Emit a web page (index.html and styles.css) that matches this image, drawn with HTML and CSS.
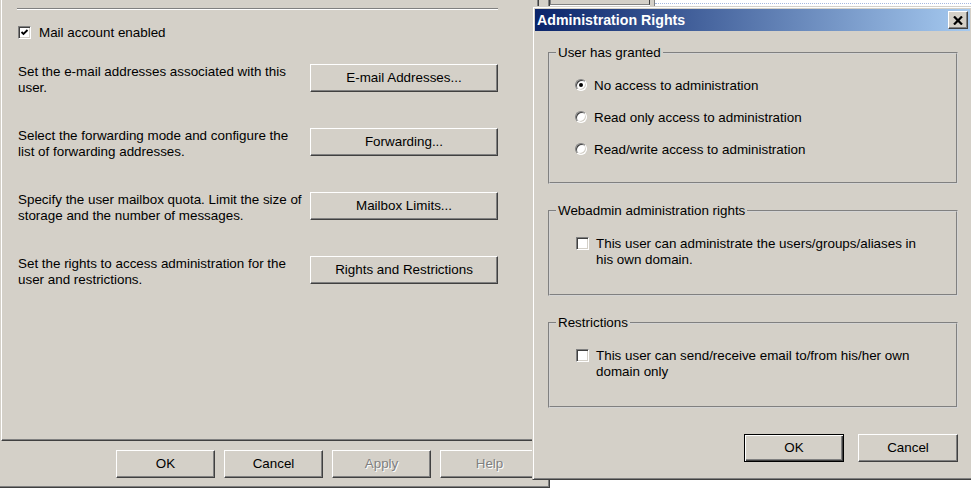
FILE: index.html
```html
<!DOCTYPE html>
<html lang="en">
  <head>
    <meta charset="UTF-8" />
    <title>Administration Rights</title>
    <link rel="stylesheet" href="styles.css">
  </head>
  <body>
    <!-- User properties dialog (behind) -->
    <div class="props">
      <div class="tab-page">
        <div class="etched"></div>

        <label class="check-row">
          <span class="check">
            <svg width="9" height="9" viewBox="0 0 9 9"><polyline points="1.5,4 3.5,6 7.5,2" fill="none" stroke="#000" stroke-width="1.8" /></svg>
          </span>
          Mail account enabled
        </label>

        <div class="options">
          <div class="option">
            <p>Set the e-mail addresses associated with this<br />user.</p>
            <button class="btn wide">E-mail Addresses...</button>
          </div>
          <div class="option">
            <p>Select the forwarding mode and configure the<br />list of forwarding addresses.</p>
            <button class="btn wide">Forwarding...</button>
          </div>
          <div class="option">
            <p>Specify the user mailbox quota. Limit the size of<br />storage and the number of messages.</p>
            <button class="btn wide">Mailbox Limits...</button>
          </div>
          <div class="option">
            <p>Set the rights to access administration for the<br />user and restrictions.</p>
            <button class="btn wide">Rights and Restrictions</button>
          </div>
        </div>
      </div>

      <div class="props-buttons">
        <button class="btn">OK</button>
        <button class="btn">Cancel</button>
        <button class="btn" disabled>Apply</button>
        <button class="btn" disabled>Help</button>
      </div>
    </div>

    <!-- bits of another window peeking above the modal -->
    <div class="behind">
      <div class="behind-box"></div>
      <div class="behind-gap"></div>
      <div class="behind-list"></div>
    </div>

    <!-- Administration Rights modal -->
    <div class="modal">
      <div class="titlebar">
        <span class="title">Administration Rights</span>
        <button class="close-btn">
          <svg width="10" height="9" viewBox="0 0 10 9"><path d="M1 0.5 L9 8.5 M9 0.5 L1 8.5" stroke="#000" stroke-width="2.2" /></svg>
        </button>
      </div>

      <div class="modal-body">
        <fieldset class="group">
          <legend>User has granted</legend>
          <div class="group-body radios">
            <label class="radio-row"><span class="radio on"></span>No access to administration</label>
            <label class="radio-row"><span class="radio"></span>Read only access to administration</label>
            <label class="radio-row"><span class="radio"></span>Read/write access to administration</label>
          </div>
        </fieldset>

        <fieldset class="group">
          <legend>Webadmin administration rights</legend>
          <div class="group-body">
            <label class="multi-row"><span class="check"></span><span>This user can administrate the users/groups/aliases in<br />his own domain.</span></label>
          </div>
        </fieldset>

        <fieldset class="group">
          <legend>Restrictions</legend>
          <div class="group-body">
            <label class="multi-row"><span class="check"></span><span>This user can send/receive email to/from his/her own<br />domain only</span></label>
          </div>
        </fieldset>

        <div class="modal-buttons">
          <button class="btn default">OK</button>
          <button class="btn">Cancel</button>
        </div>
      </div>
    </div>
  </body>
</html>
```

FILE: styles.css
```css
body {
  margin: 0;
  width: 971px;
  height: 491px;
  overflow: hidden;
  position: relative;
  background: #fff;
  color: #000;
  font-family: "Liberation Sans", Arial, sans-serif;
  font-size: 13.4px;
}

/* classic 3d push button */
.btn {
  font: inherit;
  color: #000;
  background: #d4d0c8;
  border: 1px solid;
  border-color: #fff #404040 #404040 #fff;
  box-shadow: inset -1px -1px #808080;
  padding: 0 0 2px;
  height: 28px;
}

.btn:disabled {
  color: #808080;
  text-shadow: 1px 1px #fff;
}

.btn.default {
  border-color: #000;
  box-shadow: inset 1px 1px #fff, inset -1px -1px #404040, inset -2px -2px #808080;
}

.check {
  flex: none;
  width: 13px;
  height: 13px;
  box-sizing: border-box;
  border: 1px solid;
  border-color: #808080 #fff #fff #808080;
  box-shadow: inset 1px 1px #404040, inset -1px -1px #d4d0c8;
  background: #fff;
  display: flex;
  align-items: center;
  justify-content: center;
}

.radio {
  flex: none;
  width: 12px;
  height: 12px;
  box-sizing: border-box;
  border-radius: 50%;
  border: 1px solid;
  border-color: #808080 #fff #fff #808080;
  box-shadow: inset 1px 1px #404040, inset -1px -1px #d4d0c8;
  background: #fff;
  display: flex;
  align-items: center;
  justify-content: center;
}

.radio.on::after {
  content: "";
  width: 4px;
  height: 4px;
  border-radius: 50%;
  background: #000;
}

/* ---- properties dialog ---- */
.props {
  width: 550px;
  height: 488px;
  box-sizing: border-box;
  background: #d4d0c8;
  border-right: 1px solid #404040;
  border-bottom: 1px solid #404040;
  box-shadow: inset -1px -1px #808080;
}

.tab-page {
  margin-left: 1px;
  width: 538px;
  height: 441px;
  box-sizing: border-box;
  border-left: 1px solid #fff;
  border-right: 1px solid #404040;
  border-bottom: 1px solid #404040;
  box-shadow: inset -1px -1px #808080;
  padding: 8px 0 0 16px;
}

.etched {
  width: 481px;
  margin-left: -1px;
  border-top: 1px solid #808080;
  border-bottom: 1px solid #fff;
}

.check-row {
  display: flex;
  align-items: center;
  gap: 8px;
  height: 16px;
  margin-top: 14px;
}

.options {
  margin-top: 24px;
  display: flex;
  flex-direction: column;
  gap: 32px;
}

.option {
  display: flex;
  height: 32px;
}

.option p {
  margin: 0;
  width: 292px;
  line-height: 16px;
}

.btn.wide {
  width: 188px;
}

.props-buttons {
  display: flex;
  justify-content: flex-end;
  gap: 9px;
  padding-right: 10px;
  margin-top: 9px;
}

.props-buttons .btn {
  width: 99px;
}

/* ---- other window peeking out at the top ---- */
.behind {
  position: absolute;
  top: 0;
  left: 550px;
  width: 421px;
  height: 6px;
  display: flex;
}

.behind-box {
  width: 98px;
  height: 4px;
  background: #d4d0c8;
  border-left: 1px solid #808080;
  border-right: 1px solid #404040;
  border-bottom: 1px solid #808080;
}

.behind-gap {
  width: 4px;
  background: #d4d0c8;
  border-right: 1px solid #808080;
}

.behind-list {
  flex: 1;
  height: 3px;
  border-bottom: 1px dotted #a6b8e0;
}

/* ---- Administration Rights modal ---- */
.modal {
  position: absolute;
  left: 532px;
  top: 6px;
  width: 441px;
  height: 474px;
  box-sizing: border-box;
  padding: 2px;
  background: #d4d0c8;
  border: 1px solid;
  border-color: #d4d0c8 #404040 #404040 #d4d0c8;
  box-shadow: inset 1px 1px #fff, inset -1px -1px #808080;
}

.titlebar {
  height: 22px;
  display: flex;
  align-items: center;
  padding-left: 2px;
  background: linear-gradient(to right, #0a246a, #a6caf0);
}

.title {
  color: #fff;
  font-weight: bold;
  font-size: 14.2px;
}

.close-btn {
  margin-left: auto;
  margin-right: 2px;
  width: 20px;
  height: 18px;
  padding: 0;
  background: #d4d0c8;
  border: 1px solid;
  border-color: #fff #404040 #404040 #fff;
  box-shadow: inset -1px -1px #808080;
  display: flex;
  align-items: center;
  justify-content: center;
}

.modal-body {
  padding: 14px 12px 0 13px;
}

.group {
  margin: 0 0 19px;
  padding: 0;
  min-width: 0;
  border: 2px groove #d4d4d4;
}

.group legend {
  margin-left: 6px;
  padding: 0 2px;
  line-height: 16px;
}

.group-body {
  padding: 17px 0 26px 26px;
}

.group-body.radios {
  padding: 16px 0 25px 25px;
  display: flex;
  flex-direction: column;
  gap: 16px;
}

.radio-row {
  display: flex;
  align-items: center;
  gap: 7px;
  height: 16px;
}

.multi-row {
  display: flex;
  align-items: flex-start;
  gap: 7px;
  line-height: 16px;
}

.multi-row .check {
  margin-top: 1px;
}

.modal-buttons {
  display: flex;
  justify-content: flex-end;
  gap: 14px;
  margin-top: 26px;
}

.modal-buttons .btn {
  width: 100px;
}
```
